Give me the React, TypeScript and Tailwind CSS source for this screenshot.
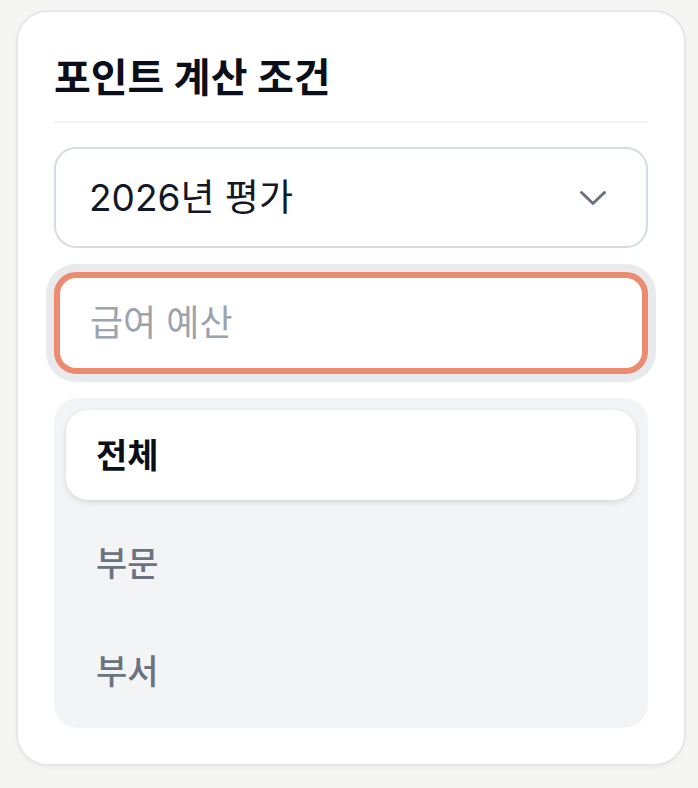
import { useState } from "react";

const font = "font-['Inter','Noto_Sans_CJK_KR',sans-serif]";

const scopes = ["전체", "부문", "부서"];

function Chevron() {
  return (
    <svg width="26" height="16" viewBox="0 0 26 16" fill="none" className="text-[#6b7280]">
      <path
        d="M1.5 2.5 L13 13.5 L24.5 2.5"
        stroke="currentColor"
        strokeWidth="3"
        strokeLinecap="round"
        strokeLinejoin="round"
      />
    </svg>
  );
}

export default function App() {
  const [scope, setScope] = useState("전체");

  return (
    <div className={`min-h-screen bg-[#f5f5f4] px-4 pt-[10px] ${font}`}>
      <div className="w-[670px] rounded-[32px] border-2 border-[#e5e7eb] bg-white p-9 shadow-[0_2px_4px_rgba(0,0,0,0.04)]">
        <h2 className="border-b-2 border-[#f1f2f4] pb-[13px] text-[40px] leading-[60px] font-bold text-[#0b0f19]">
          포인트 계산 조건
        </h2>

        <div className="mt-6 flex flex-col gap-6">
          {/* evaluation select */}
          <button className="flex h-[101px] w-full items-center justify-between rounded-[22px] border-2 border-[#d5dbe3] bg-white pl-[33px] pr-[40px] text-left">
            <span className="text-[37px] text-[#111827]">2026년 평가</span>
            <Chevron />
          </button>

          {/* budget input, focused */}
          <input
            placeholder="급여 예산"
            className="h-[102px] w-full rounded-[22px] border-[6px] border-[#ec8b70] bg-white pl-[30px] text-[36px] text-[#111827] outline-none ring-8 ring-[#e9eaec] placeholder:text-[#9ca3af]"
          />

          {/* scope tabs */}
          <div className="flex flex-col gap-[18px] rounded-[24px] bg-[#f3f4f6] p-3">
            {scopes.map((s) => (
              <button
                key={s}
                onClick={() => setScope(s)}
                className={
                  s === scope
                    ? "flex h-[90px] items-center rounded-[22px] bg-white pl-[30px] text-[34px] font-bold text-[#0b0f19] shadow-[0_2px_6px_rgba(0,0,0,0.12)]"
                    : "flex h-[90px] items-center rounded-[22px] pl-[30px] text-[34px] font-medium text-[#6b7280]"
                }
              >
                {s}
              </button>
            ))}
          </div>
        </div>
      </div>
    </div>
  );
}
